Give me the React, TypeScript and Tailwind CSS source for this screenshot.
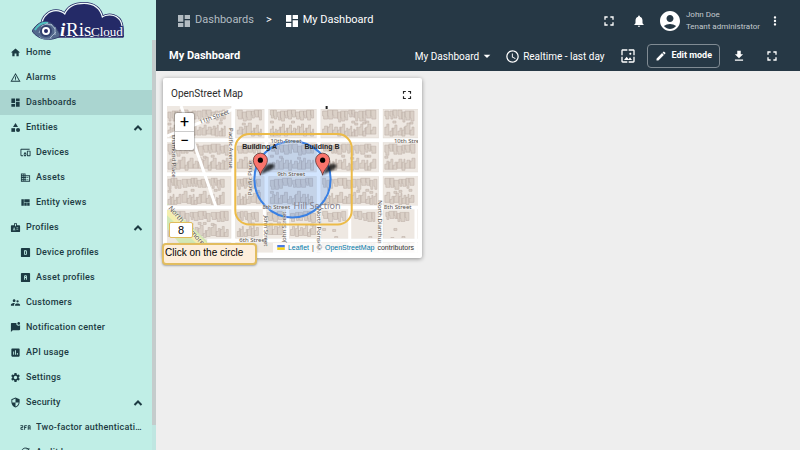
import React from "react";
import {
  MdAccessTime,
  MdAccountCircle,
  MdArrowDropDown,
  MdBadge,
  MdCategory,
  MdDashboard,
  MdDevicesOther,
  MdDomain,
  MdEdit,
  MdFileDownload,
  MdFullscreen,
  MdHome,
  MdInsertChart,
  MdMarkChatUnread,
  MdMoreVert,
  MdNotifications,
  MdSecurity,
  MdSettings,
  MdSupervisorAccount,
  MdViewQuilt,
  MdWallpaper,
  MdWarningAmber,
} from "react-icons/md";

interface IconProps {
  className?: string;
}

interface NavItem {
  label: string;
  icon: React.ComponentType<IconProps>;
  child?: boolean;
  open?: boolean;
  active?: boolean;
}

// Boxed letter icons used by the profile pages
function DeviceProfileIcon({ className }: IconProps) {
  return (
    <svg className={className} viewBox="0 0 24 24" fill="currentColor">
      <path
        fillRule="evenodd"
        d="M4 2h16a2 2 0 0 1 2 2v16a2 2 0 0 1-2 2H4a2 2 0 0 1-2-2V4a2 2 0 0 1 2-2zm5 5v10h4a2 2 0 0 0 2-2V9a2 2 0 0 0-2-2zm2 2h2v6h-2z"
      />
    </svg>
  );
}

function AssetProfileIcon({ className }: IconProps) {
  return (
    <svg className={className} viewBox="0 0 24 24" fill="currentColor">
      <path
        fillRule="evenodd"
        d="M4 2h16a2 2 0 0 1 2 2v16a2 2 0 0 1-2 2H4a2 2 0 0 1-2-2V4a2 2 0 0 1 2-2zm7 5a2 2 0 0 0-2 2v8h2v-4h2v4h2V9a2 2 0 0 0-2-2zm0 2h2v2h-2z"
      />
    </svg>
  );
}

function TwoFactorIcon({ className }: IconProps) {
  return (
    <svg className={className} viewBox="0 0 24 24" fill="none" stroke="currentColor" strokeWidth="2">
      <path d="M1 8h5v4H2v4h5M10 17V8h5M10 12h4M18 17V8h4v9M18 13h4" />
    </svg>
  );
}

function AuditIcon({ className }: IconProps) {
  return (
    <svg className={className} viewBox="0 0 24 24" fill="none" stroke="currentColor" strokeWidth="2">
      <path d="M20 7a9 9 0 1 0 1 5M12 7v5l4 2M14 4h7" />
    </svg>
  );
}

function ChevronUp({ className }: IconProps) {
  return (
    <svg className={className} viewBox="0 0 24 24" fill="none" stroke="currentColor" strokeWidth="4">
      <path d="M5 16l7-7 7 7" />
    </svg>
  );
}

const NAV_ITEMS: NavItem[] = [
  { label: "Home", icon: MdHome },
  { label: "Alarms", icon: MdWarningAmber },
  { label: "Dashboards", icon: MdDashboard, active: true },
  { label: "Entities", icon: MdCategory, open: true },
  { label: "Devices", icon: MdDevicesOther, child: true },
  { label: "Assets", icon: MdDomain, child: true },
  { label: "Entity views", icon: MdViewQuilt, child: true },
  { label: "Profiles", icon: MdBadge, open: true },
  { label: "Device profiles", icon: DeviceProfileIcon, child: true },
  { label: "Asset profiles", icon: AssetProfileIcon, child: true },
  { label: "Customers", icon: MdSupervisorAccount },
  { label: "Notification center", icon: MdMarkChatUnread },
  { label: "API usage", icon: MdInsertChart },
  { label: "Settings", icon: MdSettings },
  { label: "Security", icon: MdSecurity, open: true },
  { label: "Two-factor authentication", icon: TwoFactorIcon, child: true },
  { label: "Audit logs", icon: AuditIcon, child: true },
];

const CLOUD = "M15 36C9 30 9 20 15 15C20 10 28 10 33 15C36 7 43 4 52 4C62 4 68 9 70 18C77 13 87 16 89 24C90 28 90 32 90 36Z";

function Logo() {
  return (
    <svg className="h-10 w-24" viewBox="0 0 96 40" role="img" aria-label="iRis Cloud">
      <g strokeLinejoin="round">
        <path d={CLOUD} fill="#242a67" stroke="#242a67" strokeWidth="4" />
        <path d={CLOUD} fill="#242a67" stroke="#f2fbfb" strokeWidth="2.4" />
        <path d={CLOUD} fill="#242a67" />
      </g>
      <path d="M0 31C5 23 11 20 17 22C22 24 25 29 29 36C18 42 6 40 0 31Z" fill="#53688c" stroke="#34416f" />
      <g fill="none" strokeWidth="1">
        <path d="M3 30C6 25 11 22 16 23" stroke="#4fc0c0" strokeWidth="2" />
        <path d="M7 36C9 39 15 40 20 38" stroke="#8296b4" />
        <path d="M11 25L7 33M16 23L9 27M20 25L14 24M23 29L19 24M23 35L23 27M18 38L24 32" stroke="#a7b9cc" />
      </g>
      <circle cx="14" cy="31" r="6" fill="#33426f" />
      <circle cx="14" cy="31" r="3" fill="#242a67" stroke="#fff" strokeWidth="2" />
      <g fill="#fff" stroke="#242a67" strokeWidth="2" paintOrder="stroke" fontFamily="Liberation Serif, serif">
        <text x="28" y="36" fontSize="19" fontStyle="italic" fontWeight="bold">i</text>
        <text x="34" y="36" fontSize="19">Ris</text>
        <text x="59" y="36" fontSize="13">Cloud</text>
      </g>
    </svg>
  );
}

function Sidebar() {
  return (
    <aside className="flex w-39 shrink-0 flex-col overflow-hidden bg-[#c0eee6] text-[#1c3b43]">
      <div className="flex h-10 shrink-0 pl-8">
        <Logo />
      </div>
      <div className="flex min-h-0 flex-1">
        <nav className="min-w-0 flex-1 overflow-hidden">
          {NAV_ITEMS.map(({ label, icon: Icon, child, open, active }) => (
            <a
              key={label}
              href="#"
              className={`flex h-[25px] items-center gap-[5px] text-[9px] font-medium tracking-wide ${
                child ? "pr-2 pl-5" : "pr-2 pl-[10px]"
              } ${active ? "bg-[#aad5d0]" : ""}`}
            >
              <Icon className="size-[11px] shrink-0" />
              <span className="min-w-0 flex-1 truncate">{label}</span>
              {open && <ChevronUp className="size-3 shrink-0" />}
            </a>
          ))}
        </nav>
        <div className="w-1 shrink-0 bg-[#bfe6e1]">
          <div className="h-[94%] bg-[#c4cccc]" />
        </div>
      </div>
    </aside>
  );
}

function Header() {
  return (
    <header className="flex h-[41px] shrink-0 items-center pr-[18px] pl-5">
      <nav className="flex flex-1 items-center text-[11px]">
        <a href="#" className="flex items-center gap-[3px] text-[#b3bcc2]">
          <MdDashboard className="size-4" />
          Dashboards
        </a>
        <span className="px-3">&gt;</span>
        <a href="#" className="flex items-center gap-[3px]">
          <MdDashboard className="size-4" />
          My Dashboard
        </a>
      </nav>
      <div className="flex items-center">
        <button aria-label="Fullscreen" className="mr-[15px]">
          <MdFullscreen className="size-4" />
        </button>
        <button aria-label="Notifications" className="mr-3">
          <MdNotifications className="size-[14px]" />
        </button>
        <MdAccountCircle className="mr-1 size-6" />
        <div className="mr-2 text-[8px] leading-3 text-[#c3cace]">
          <div>John Doe</div>
          <div>Tenant administrator</div>
        </div>
        <button aria-label="More">
          <MdMoreVert className="size-[14px]" />
        </button>
      </div>
    </header>
  );
}

function Toolbar() {
  return (
    <div className="flex h-[30px] shrink-0 items-center pr-5 pl-[13px]">
      <h1 className="flex-1 text-[11px] font-bold">My Dashboard</h1>
      <button className="mr-[10px] flex items-center text-[10px]">
        My Dashboard
        <MdArrowDropDown className="size-4" />
      </button>
      <button className="mr-4 flex items-center gap-[3px] text-[10px]">
        <MdAccessTime className="size-[15px]" />
        Realtime - last day
      </button>
      <button aria-label="Dashboard image" className="mr-[11px]">
        <MdWallpaper className="size-4" />
      </button>
      <button className="mr-3 flex h-6 items-center gap-1 rounded-sm border border-[#808b93] px-[7px] text-[9px] font-bold">
        <MdEdit className="size-3" />
        Edit mode
      </button>
      <button aria-label="Download" className="mr-[18px]">
        <MdFileDownload className="size-[14px]" />
      </button>
      <button aria-label="Expand dashboard">
        <MdFullscreen className="size-4" />
      </button>
    </div>
  );
}

// City blocks as [x, y, width, height]
const BLOCKS = [
  [0, 37, 62, 28], [0, 71, 62, 28], [0, 104, 62, 28], [0, 3, 62, 28],
  [69, 3, 28, 28], [102, 3, 46, 28], [154, 3, 57, 28], [216, 3, 34, 28],
  [69, 37, 28, 28], [102, 37, 46, 28], [154, 37, 57, 28], [216, 37, 34, 28],
  [69, 71, 28, 28], [102, 71, 46, 28], [154, 71, 57, 28], [216, 71, 34, 28],
  [69, 104, 26, 27], [99, 104, 19, 27], [122, 104, 26, 27], [154, 104, 26, 40], [185, 104, 26, 40], [217, 104, 29, 40],
];

// Houses run along the two long sides of each block, with a few in the yard
function Houses({ block, seed }: { block: number[]; seed: number }) {
  const [x, y, w, h] = block;
  let path = "";
  let step = 0;
  for (let left = x + 1; left < x + w - 4; step++) {
    const n = (seed * 7 + step * step * 3 + step * 5) % 11;
    const m = (seed * 3 + step * 7) % 5;
    const width = 3 + (n % 3);
    const top = 7 + (n % 4);
    const bottom = 7 + m;
    path += `M${left} ${y + 1 + (m % 3)}h${width}v${top}h-${width - 1}v-3h-1z`;
    path += `M${left} ${y + h - 1 - (n % 3)}h${width}v-${bottom}h-${width - 2}v3h-2z`;
    if ((n + m) % 4 === 0) path += `M${left} ${y + h / 2 - 2 + (m % 3)}h3v2h-3z`;
    left += width + (n % 5 === 1 ? 1 : 0);
  }
  return <path d={path} fill="#dad0c7" stroke="#bfb3aa" strokeWidth="0.6" />;
}

function Marker({ x, y }: { x: number; y: number }) {
  return (
    <g transform={`translate(${x} ${y})`}>
      <path
        d="M0 0L4 -8C7 -13 15 -12 14 -9C14 -6 6 -4 0 0Z"
        fill="#000"
        opacity="0.75"
        filter="url(#marker-shadow)"
      />
      <path
        d="M0 0C-1 -6 -7 -9 -7 -15A7 7 0 0 1 7 -15C7 -9 1 -6 0 0Z"
        fill="#f9746c"
        stroke="#5b3230"
        strokeWidth="0.8"
      />
      <circle cx="0" cy="-15" r="2.6" fill="#000" />
    </g>
  );
}

function StreetMap() {
  return (
    <svg className="block w-full" viewBox="0 0 250 146">
      <defs>
        <filter id="marker-shadow">
          <feGaussianBlur stdDeviation="0.8" />
        </filter>
      </defs>
      <rect width="250" height="146" fill="#eee8e2" />
      {BLOCKS.map((block, i) => (
        <Houses key={i} block={block} seed={i + 1} />
      ))}
      <path d="M0 97L52 146H20L0 122Z" fill="#d3e8b5" />
      <path d="M0 104L44 146" stroke="#f4efae" strokeWidth="7" />
      <g fill="none" stroke="#e2dcd6" strokeWidth="5">
        <path d="M66 0V146M99 0V100M151 0V146M213 0V146" />
        <path d="M66 1H250M0 34H250M0 68H250M0 101H250M40 134H250" />
      </g>
      <g fill="none" stroke="#fff" strokeWidth="4">
        <path d="M66 0V146M99 0V100M151 0V146M213 0V146" />
        <path d="M66 1H250M0 34H250M0 68H250M0 101H250M40 134H250" />
        <path d="M0 30L66 3M14 0L49 101M97 101V134M120 101V134M182 101V146M248 101V146" strokeWidth="3" />
      </g>
      <path d="M158 0h2v3h-2z" fill="#222" />
      <circle cx="125" cy="73" r="38" fill="#3388ff" fillOpacity="0.22" stroke="#3980e4" strokeWidth="2" />
      <g
        fill="#55524f"
        stroke="#f7f4f0"
        strokeOpacity="0.6"
        strokeWidth="1"
        paintOrder="stroke"
        fontFamily="Noto Sans, sans-serif"
        fontSize="6"
      >
        <text transform="translate(33 18) rotate(-20)">11th Street</text>
        <text x="103" y="37">10th Street</text>
        <text x="226" y="37">10th Street</text>
        <text x="110" y="70">9th Street</text>
        <text x="95" y="103">8th Street</text>
        <text x="216" y="103">8th Street</text>
        <text x="72" y="135">6th Street</text>
        <text transform="translate(62 22) rotate(90)">Pacific Avenue</text>
        <text transform="translate(5 29) rotate(90)">Diamond Place</text>
        <text transform="translate(85 89) rotate(-90)">Pacific Place</text>
        <text transform="translate(97 109) rotate(90)">John Street</text>
        <text transform="translate(119 136) rotate(-90)">John Street</text>
        <text transform="translate(149 102) rotate(90)">North Poinsettia</text>
        <text transform="translate(210 94) rotate(90)">North Dianthus</text>
        <text transform="translate(1 102) rotate(48)" fontSize="7">North Ardmore</text>
      </g>
      <text x="126" y="103" fontSize="9" fill="#83808a" fontFamily="Noto Sans, sans-serif">
        Hill Section
      </text>
      <Marker x={93} y={69} />
      <Marker x={155} y={69} />
      <g fontFamily="Liberation Sans, sans-serif" fontWeight="bold" fontSize="7" fill="#222">
        <text x="75" y="43">Building A</text>
        <text x="137" y="43">Building B</text>
      </g>
      <rect x="68" y="28" width="116" height="90" rx="14" fill="none" stroke="#ecbb48" strokeWidth="2" />
    </svg>
  );
}

function MapCard() {
  return (
    <section className="relative w-[259px] rounded-xs bg-white px-1 pb-[5px] shadow-[0_1px_4px_rgba(0,0,0,0.4)]">
      <div className="flex h-7 items-center justify-between pt-[2px] pr-1 pl-1">
        <h2 className="text-[10px] text-[#2c2c2c]">OpenStreet Map</h2>
        <button aria-label="Expand map" className="pt-1">
          <MdFullscreen className="size-[14px] text-[#222]" />
        </button>
      </div>
      <div className="relative">
        <StreetMap />
        <div className="absolute top-[7px] left-2 flex w-[19px] flex-col rounded-xs bg-white text-center text-base leading-none text-black shadow-[0_0_1px_1px_rgba(0,0,0,0.25)]">
          <button aria-label="Zoom in" className="h-[19px] border-b border-[#ccc]">+</button>
          <button aria-label="Zoom out" className="h-[18px]">−</button>
        </div>
        <div className="absolute right-0 bottom-0 flex items-center gap-[3px] bg-white/80 px-1 font-['Liberation_Sans',sans-serif] text-[7px] leading-[10px] text-[#333]">
          <svg className="h-[5px] w-2" viewBox="0 0 12 8">
            <path fill="#4c7be1" d="M0 0h12v4H0z" />
            <path fill="#ffd500" d="M0 4h12v3H0z" />
            <path fill="#e0bc00" d="M0 7h12v1H0z" />
          </svg>
          <a href="#" className="text-[#0078a8]">Leaflet</a>
          <span>|</span>
          <span>©</span>
          <a href="#" className="text-[#0078a8]">OpenStreetMap</a>
          <span>contributors</span>
        </div>
      </div>
      {/* Guided tour step */}
      <div className="absolute top-36 left-[6px] flex h-4 w-6 items-center justify-center rounded-xs border border-[#e0bb5b] bg-white font-['Liberation_Sans',sans-serif] text-[11px] text-black">
        8
      </div>
      <div className="absolute top-[165px] -left-px flex h-[22px] w-[95px] items-center rounded-sm border-2 border-[#e2bd60] bg-[#fdeedb] pb-1 pl-px font-['Liberation_Sans',sans-serif] text-[10px] whitespace-nowrap text-black shadow-[0_1px_2px_rgba(0,0,0,0.3)]">
        Click on the circle
      </div>
    </section>
  );
}

export default function App() {
  return (
    <div className="flex h-screen overflow-hidden bg-[#eeeeee] font-[Roboto,sans-serif]">
      <Sidebar />
      <div className="flex min-w-0 flex-1 flex-col">
        <div className="bg-[#263845] text-white">
          <Header />
          <Toolbar />
        </div>
        <main className="flex-1 px-[7px] pt-[7px]">
          <MapCard />
        </main>
      </div>
    </div>
  );
}
